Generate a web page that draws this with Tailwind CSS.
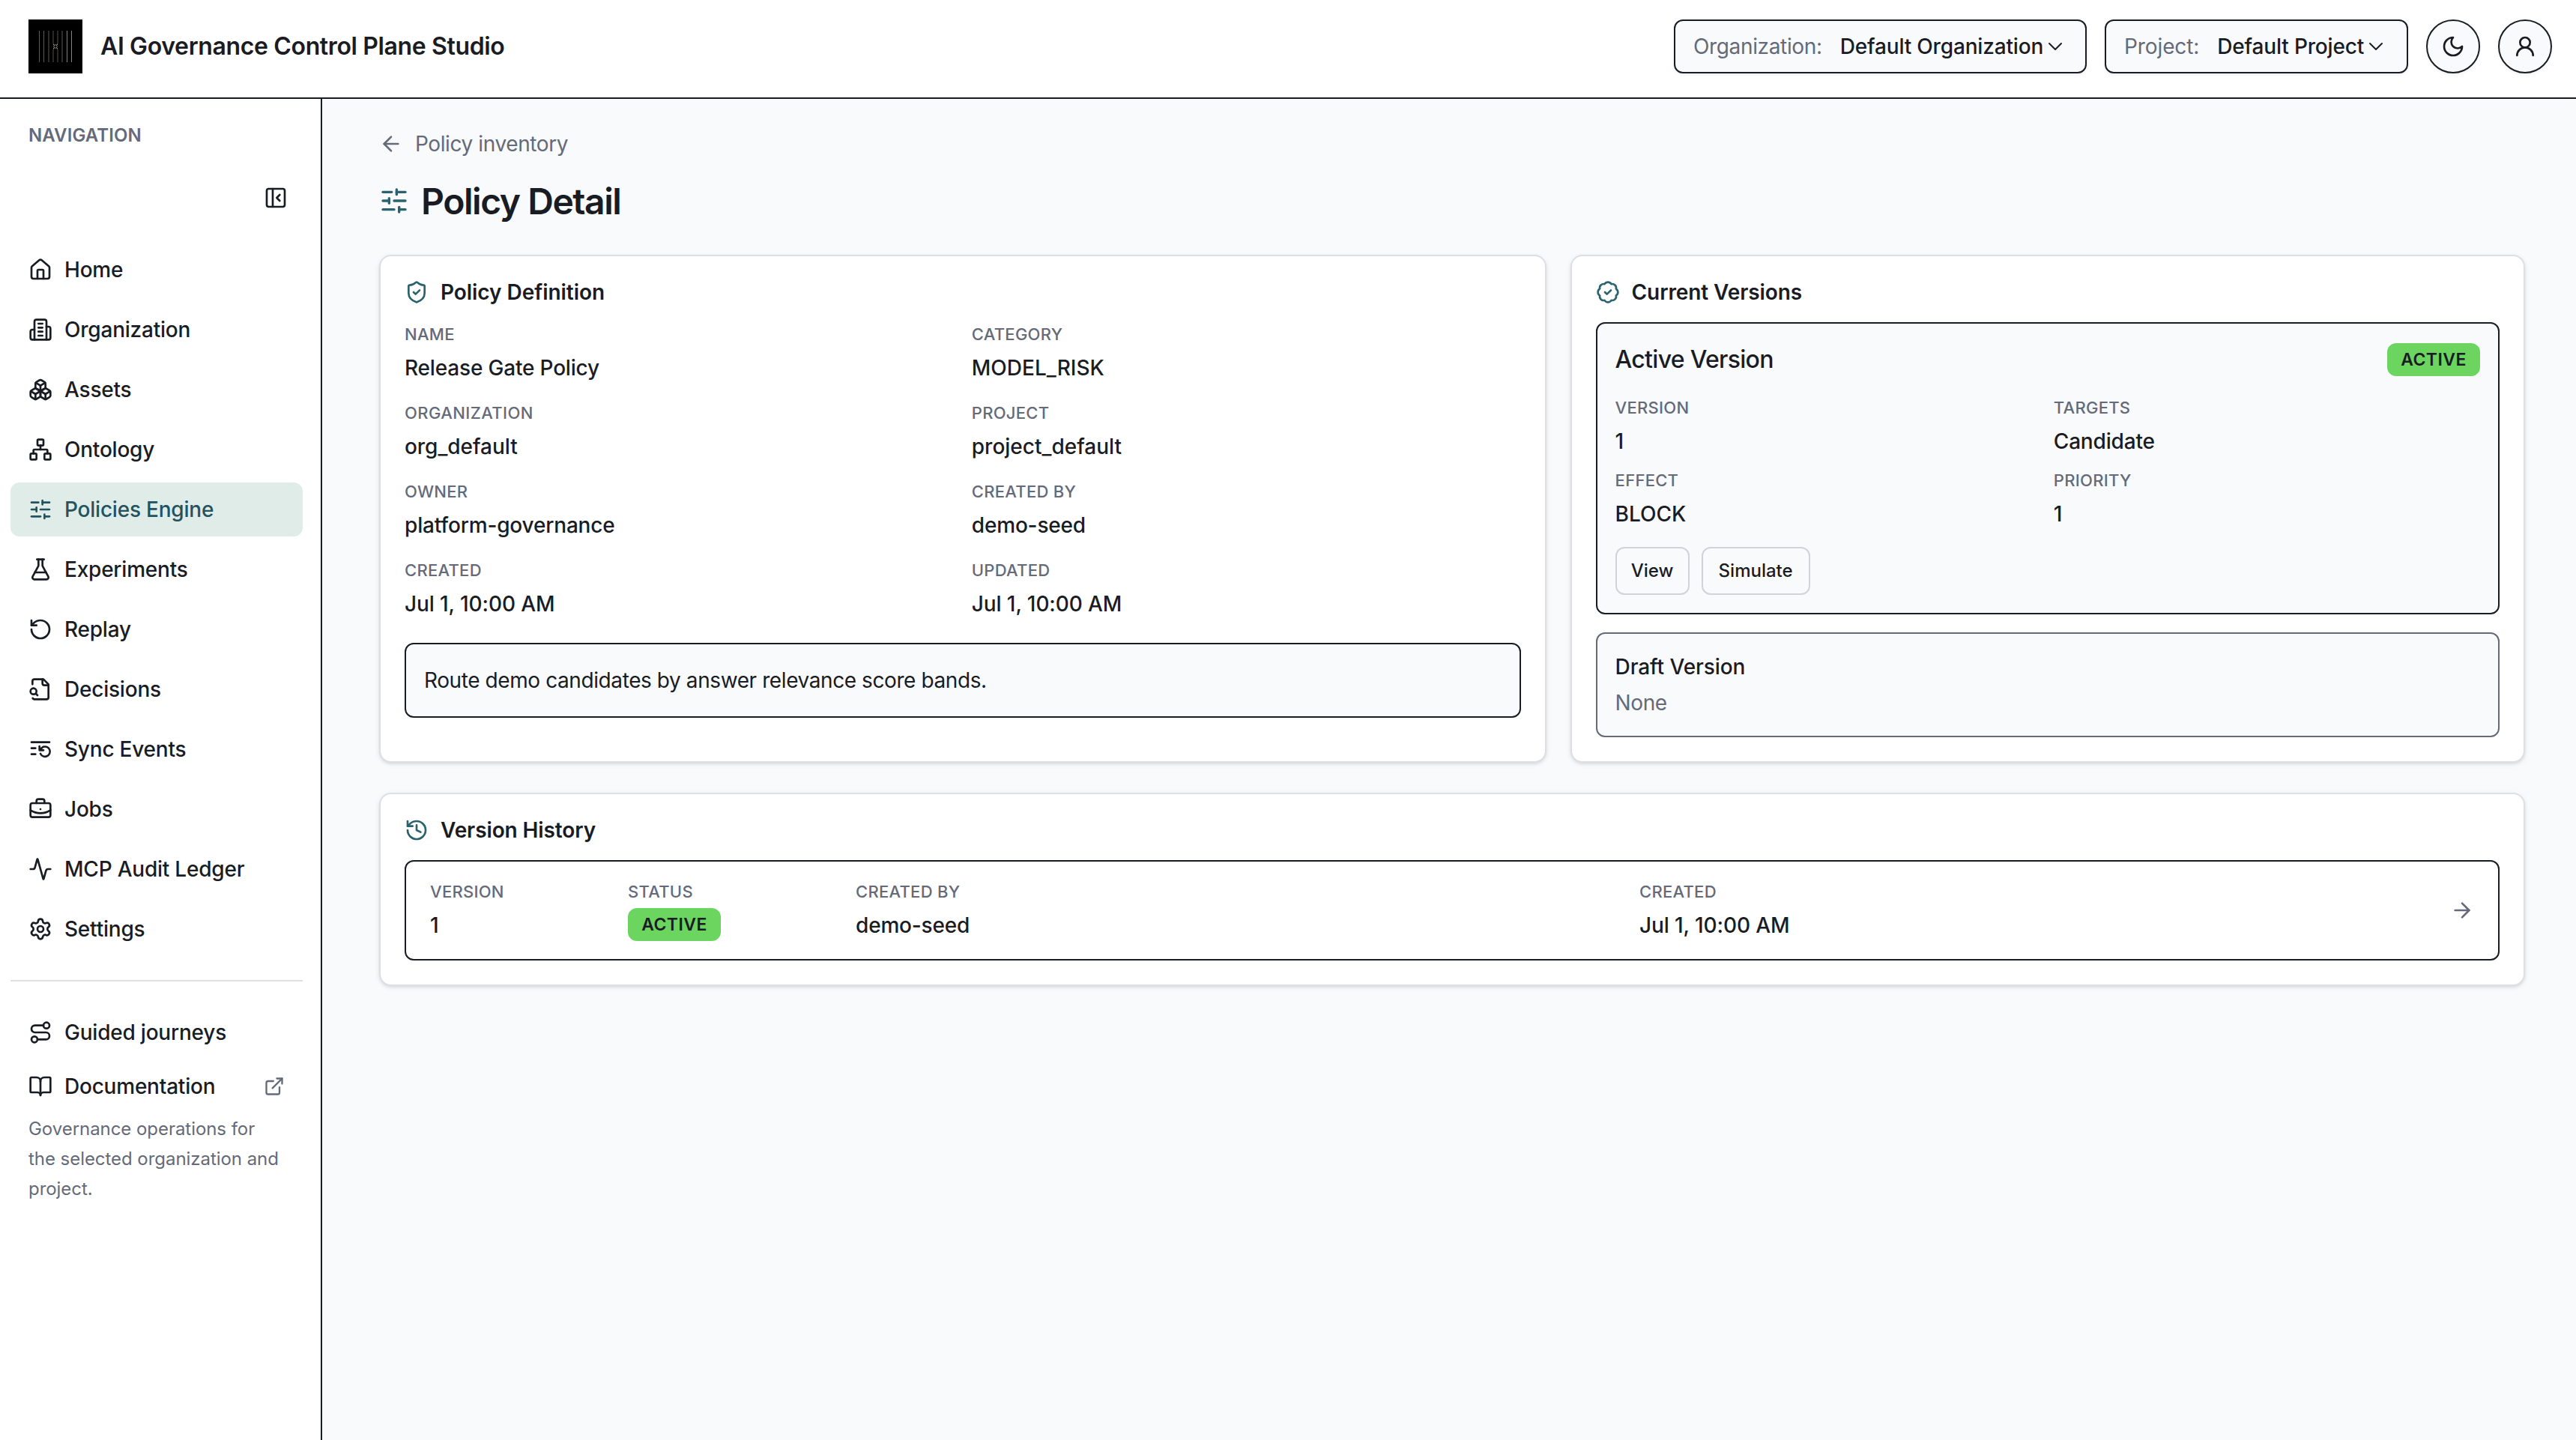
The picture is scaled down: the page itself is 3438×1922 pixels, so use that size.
<!DOCTYPE html>
<html lang="en">

<head>
    <meta charset="UTF-8">
    <meta name="viewport" content="width=device-width, initial-scale=1.0">
    <title>AI Governance Control Plane Studio</title>
    <script src="https://cdn.jsdelivr.net/npm/@tailwindcss/browser@4"></script>
</head>

<body class="bg-[#f9fafc] font-['Inter',sans-serif] text-[28px] leading-10 text-[#1a1c24]">
    <div class="flex h-[1922px] flex-col overflow-hidden">
        <header class="flex h-[132px] shrink-0 items-center justify-between border-b-2 border-[#1a1c24] bg-white pr-8 pb-1.5 pl-[38px]">
            <div class="flex items-center gap-6">
                <svg class="size-[72px]" viewBox="0 0 72 72" fill="none">
                    <rect width="72" height="72" fill="#000" />
                    <g stroke="#5d5b57" stroke-width="1">
                        <path d="M14.5 15v42M20.5 15v42M27 15v42M45 15v42" />
                        <path d="M51.5 15v42M57.5 15v42" stroke="#86837d" />
                        <path d="M33 15v17l1.500 1.500M39 15v17l-1.500 1.500M33 57V40l1.500-1.500M39 57V40l-1.500-1.500" stroke="#54504a" />
                    </g>
                    <circle cx="36" cy="36" r="2.200" stroke="#8d8270" />
                    <path d="M33 33l1.500 1.500M39 33l-1.500 1.500M33 39l1.500-1.500M39 39l-1.500-1.500" stroke="#a3977f" />
                </svg>
                <span class="text-[32px] font-semibold tracking-[-0.36px]">AI Governance Control Plane Studio</span>
            </div>
            <div class="flex items-center gap-6">
                <button class="flex h-[72px] w-[551px] items-center rounded-xl border-2 border-[#1a1c24] bg-[#f9fafc] pl-6 shadow-[0_2px_4px_rgba(0,0,0,0.06)]">
                    <span class="tracking-[-0.35px] text-[#646a7a]">Organization:</span>
                    <span class="ml-6 font-medium tracking-[-0.17px]">Default Organization</span>
                    <svg class="size-8" viewBox="0 0 24 24" fill="none" stroke="currentColor" stroke-width="1.5" stroke-linecap="round" stroke-linejoin="round"><path d="m6 9 6 6 6-6" /></svg>
                </button>
                <button class="flex h-[72px] w-[405px] items-center rounded-xl border-2 border-[#1a1c24] bg-[#f9fafc] pl-6 shadow-[0_2px_4px_rgba(0,0,0,0.06)]">
                    <span class="tracking-[-0.1px] text-[#646a7a]">Project:</span>
                    <span class="ml-6 font-medium tracking-[-0.17px]">Default Project</span>
                    <svg class="size-8" viewBox="0 0 24 24" fill="none" stroke="currentColor" stroke-width="1.5" stroke-linecap="round" stroke-linejoin="round"><path d="m6 9 6 6 6-6" /></svg>
                </button>
                <button class="flex size-[72px] items-center justify-center rounded-full border-2 border-[#1a1c24] bg-[#f9fafc] shadow-[0_2px_4px_rgba(0,0,0,0.06)]">
                    <svg class="size-8" viewBox="0 0 24 24" fill="none" stroke="currentColor" stroke-width="2" stroke-linecap="round" stroke-linejoin="round"><path d="M12 3a6 6 0 0 0 9 9 9 9 0 1 1-9-9Z" /></svg>
                </button>
                <button class="flex size-[72px] items-center justify-center rounded-full border-2 border-[#1a1c24] bg-[#f9fafc] shadow-[0_2px_4px_rgba(0,0,0,0.06)]">
                    <svg class="size-8" viewBox="0 0 24 24" fill="none" stroke="currentColor" stroke-width="2" stroke-linecap="round" stroke-linejoin="round"><circle cx="12" cy="8" r="5" /><path d="M20 21a8 8 0 0 0-16 0" /></svg>
                </button>
            </div>
        </header>

        <div class="flex min-h-0 flex-1">
            <aside class="flex w-[430px] shrink-0 flex-col border-r-2 border-[#1a1c24] bg-white pt-[31px] pr-6 pl-3.5">
                <div class="pl-6 text-[24px] leading-9 font-semibold tracking-[0.1px] text-[#646a7a]">NAVIGATION</div>
                <div class="mt-[49px] flex justify-end pr-5">
                    <svg class="size-8" viewBox="0 0 24 24" fill="none" stroke="currentColor" stroke-width="2" stroke-linecap="round" stroke-linejoin="round"><rect width="18" height="18" x="3" y="3" rx="2" /><path d="M9 3v18" /><path d="m16 15-3-3 3-3" /></svg>
                </div>
                <nav class="mt-11 flex flex-col gap-2 font-medium tracking-[-0.22px]">
                    <a class="flex h-[72px] items-center gap-4 rounded-xl px-6">
                        <svg class="size-8" viewBox="0 0 24 24" fill="none" stroke="currentColor" stroke-width="2" stroke-linecap="round" stroke-linejoin="round"><path d="M15 21v-8a1 1 0 0 0-1-1h-4a1 1 0 0 0-1 1v8" /><path d="M3 10a2 2 0 0 1 .709-1.528l7-5.999a2 2 0 0 1 2.582 0l7 5.999A2 2 0 0 1 21 10v9a2 2 0 0 1-2 2H5a2 2 0 0 1-2-2z" /></svg>
                        Home
                    </a>
                    <a class="flex h-[72px] items-center gap-4 rounded-xl px-6">
                        <svg class="size-8" viewBox="0 0 24 24" fill="none" stroke="currentColor" stroke-width="2" stroke-linecap="round" stroke-linejoin="round"><path d="M6 22V4a2 2 0 0 1 2-2h8a2 2 0 0 1 2 2v18Z" /><path d="M6 12H4a2 2 0 0 0-2 2v6a2 2 0 0 0 2 2h2" /><path d="M18 9h2a2 2 0 0 1 2 2v9a2 2 0 0 1-2 2h-2" /><path d="M10 6h4" /><path d="M10 10h4" /><path d="M10 14h4" /><path d="M10 18h4" /></svg>
                        Organization
                    </a>
                    <a class="flex h-[72px] items-center gap-4 rounded-xl px-6">
                        <svg class="size-8" viewBox="0 0 24 24" fill="none" stroke="currentColor" stroke-width="2" stroke-linecap="round" stroke-linejoin="round"><path d="M2.97 12.92A2 2 0 0 0 2 14.63v3.24a2 2 0 0 0 .97 1.71l3 1.8a2 2 0 0 0 2.06 0L12 19v-5.5l-5-3-4.03 2.42Z" /><path d="m7 16.5-4.74-2.85" /><path d="m7 16.5 5-3" /><path d="M7 16.5v5.17" /><path d="M12 13.5V19l3.97 2.38a2 2 0 0 0 2.06 0l3-1.8a2 2 0 0 0 .97-1.71v-3.24a2 2 0 0 0-.97-1.71L17 10.5l-5 3Z" /><path d="m17 16.5-5-3" /><path d="m17 16.5 4.74-2.85" /><path d="M17 16.5v5.17" /><path d="M7.97 4.42A2 2 0 0 0 7 6.13v4.37l5 3 5-3V6.13a2 2 0 0 0-.97-1.71l-3-1.8a2 2 0 0 0-2.06 0l-3 1.8Z" /><path d="M12 8 7.26 5.15" /><path d="m12 8 4.74-2.85" /><path d="M12 13.5V8" /></svg>
                        Assets
                    </a>
                    <a class="flex h-[72px] items-center gap-4 rounded-xl px-6">
                        <svg class="size-8" viewBox="0 0 24 24" fill="none" stroke="currentColor" stroke-width="2" stroke-linecap="round" stroke-linejoin="round"><rect x="16" y="16" width="6" height="6" rx="1" /><rect x="2" y="16" width="6" height="6" rx="1" /><rect x="9" y="2" width="6" height="6" rx="1" /><path d="M5 16v-3a1 1 0 0 1 1-1h12a1 1 0 0 1 1 1v3" /><path d="M12 12V8" /></svg>
                        Ontology
                    </a>
                    <a class="flex h-[72px] items-center gap-4 rounded-xl bg-[#e0ece8] px-6 text-[#24535f]">
                        <svg class="size-8" viewBox="0 0 24 24" fill="none" stroke="currentColor" stroke-width="2" stroke-linecap="round" stroke-linejoin="round"><path d="M10 5H3" /><path d="M12 19H3" /><path d="M14 3v4" /><path d="M16 17v4" /><path d="M21 12h-9" /><path d="M21 19h-5" /><path d="M21 5h-7" /><path d="M8 10v4" /><path d="M8 12H3" /></svg>
                        Policies Engine
                    </a>
                    <a class="flex h-[72px] items-center gap-4 rounded-xl px-6">
                        <svg class="size-8" viewBox="0 0 24 24" fill="none" stroke="currentColor" stroke-width="2" stroke-linecap="round" stroke-linejoin="round"><path d="M14 2v6a2 2 0 0 0 .245.96l5.51 10.08A2 2 0 0 1 18 22H6a2 2 0 0 1-1.755-2.96l5.51-10.08A2 2 0 0 0 10 8V2" /><path d="M6.453 15h11.094" /><path d="M8.5 2h7" /></svg>
                        Experiments
                    </a>
                    <a class="flex h-[72px] items-center gap-4 rounded-xl px-6">
                        <svg class="size-8" viewBox="0 0 24 24" fill="none" stroke="currentColor" stroke-width="2" stroke-linecap="round" stroke-linejoin="round"><path d="M3 12a9 9 0 1 0 9-9 9.75 9.75 0 0 0-6.74 2.74L3 8" /><path d="M3 3v5h5" /></svg>
                        Replay
                    </a>
                    <a class="flex h-[72px] items-center gap-4 rounded-xl px-6">
                        <svg class="size-8" viewBox="0 0 24 24" fill="none" stroke="currentColor" stroke-width="2" stroke-linecap="round" stroke-linejoin="round"><path d="M14 2v4a2 2 0 0 0 2 2h4" /><path d="M4.268 21a2 2 0 0 0 1.727 1H18a2 2 0 0 0 2-2V7l-5-5H6a2 2 0 0 0-2 2v3" /><path d="m9 18-1.5-1.5" /><circle cx="5" cy="14" r="3" /></svg>
                        Decisions
                    </a>
                    <a class="flex h-[72px] items-center gap-4 rounded-xl px-6">
                        <svg class="size-8" viewBox="0 0 24 24" fill="none" stroke="currentColor" stroke-width="2" stroke-linecap="round" stroke-linejoin="round"><path d="M21 5H3" /><path d="M7 11H3" /><path d="M7 17H3" /><path d="M12 17a5 5 0 1 0 3-6.9 4.5 4.5 0 0 0-1.6 1L12 13" transform="translate(0 -.5)" /><path d="M11 9v4h4" /></svg>
                        Sync Events
                    </a>
                    <a class="flex h-[72px] items-center gap-4 rounded-xl px-6">
                        <svg class="size-8" viewBox="0 0 24 24" fill="none" stroke="currentColor" stroke-width="2" stroke-linecap="round" stroke-linejoin="round"><path d="M12 12h.01" /><path d="M16 6V4a2 2 0 0 0-2-2h-4a2 2 0 0 0-2 2v2" /><path d="M22 13a18.15 18.15 0 0 1-20 0" /><rect width="20" height="14" x="2" y="6" rx="2" /></svg>
                        Jobs
                    </a>
                    <a class="flex h-[72px] items-center gap-4 rounded-xl px-6">
                        <svg class="size-8" viewBox="0 0 24 24" fill="none" stroke="currentColor" stroke-width="2" stroke-linecap="round" stroke-linejoin="round"><path d="M22 12h-2.48a2 2 0 0 0-1.93 1.46l-2.35 8.36a.25.25 0 0 1-.48 0L9.24 2.18a.25.25 0 0 0-.48 0l-2.35 8.36A2 2 0 0 1 4.49 12H2" /></svg>
                        MCP Audit Ledger
                    </a>
                    <a class="flex h-[72px] items-center gap-4 rounded-xl px-6">
                        <svg class="size-8" viewBox="0 0 24 24" fill="none" stroke="currentColor" stroke-width="2" stroke-linecap="round" stroke-linejoin="round"><path d="M9.671 4.136a2.34 2.34 0 0 1 4.659 0 2.34 2.34 0 0 0 3.319 1.915 2.34 2.34 0 0 1 2.33 4.033 2.34 2.34 0 0 0 0 3.831 2.34 2.34 0 0 1-2.33 4.033 2.34 2.34 0 0 0-3.319 1.915 2.34 2.34 0 0 1-4.659 0 2.34 2.34 0 0 0-3.32-1.915 2.34 2.34 0 0 1-2.33-4.033 2.34 2.34 0 0 0 0-3.831A2.34 2.34 0 0 1 6.35 6.051a2.34 2.34 0 0 0 3.319-1.915" /><circle cx="12" cy="12" r="3" /></svg>
                        Settings
                    </a>
                </nav>
                <div class="mt-8 flex flex-col border-t-2 border-[#dddfe4] pt-8 font-medium tracking-[-0.22px]">
                    <a class="flex h-[72px] items-center gap-4 px-6">
                        <svg class="size-8" viewBox="0 0 24 24" fill="none" stroke="currentColor" stroke-width="2" stroke-linecap="round" stroke-linejoin="round"><circle cx="6" cy="19" r="3" /><path d="M9 19h8.500a3.500 3.500 0 0 0 0-7h-11a3.500 3.500 0 0 1 0-7H15" /><circle cx="18" cy="5" r="3" /></svg>
                        Guided journeys
                    </a>
                    <a class="flex h-[72px] items-center gap-4 px-6">
                        <svg class="size-8" viewBox="0 0 24 24" fill="none" stroke="currentColor" stroke-width="2" stroke-linecap="round" stroke-linejoin="round"><path d="M12 7v14" /><path d="M3 18a1 1 0 0 1-1-1V4a1 1 0 0 1 1-1h5a4 4 0 0 1 4 4 4 4 0 0 1 4-4h5a1 1 0 0 1 1 1v13a1 1 0 0 1-1 1h-6a3 3 0 0 0-3 3 3 3 0 0 0-3-3z" /></svg>
                        Documentation
                        <svg class="ml-auto size-7 text-[#646a7a]" viewBox="0 0 24 24" fill="none" stroke="currentColor" stroke-width="2" stroke-linecap="round" stroke-linejoin="round"><path d="M15 3h6v6" /><path d="M10 14 21 3" /><path d="M18 13v6a2 2 0 0 1-2 2H5a2 2 0 0 1-2-2V8a2 2 0 0 1 2-2h6" /></svg>
                    </a>
                    <p class="pt-px pl-6 text-[24px] leading-10 font-normal tracking-[-0.05px] text-[#646a7a]">Governance operations for<br>the selected organization and<br>project.</p>
                </div>
            </aside>

            <main class="flex-1 pt-10 pr-[68px] pl-[76px]">
                <a class="flex items-center gap-4 tracking-[-0.4px] text-[#646a7a]">
                    <svg class="size-8" viewBox="0 0 24 24" fill="none" stroke="currentColor" stroke-width="2" stroke-linecap="round" stroke-linejoin="round"><path d="m12 19-7-7 7-7" /><path d="M19 12H5" /></svg>
                    Policy inventory
                </a>
                <h1 class="mt-6 flex h-16 items-center gap-4 text-[48px] leading-[64px] font-semibold tracking-[-1.45px]">
                    <svg class="size-10 text-[#2a626e]" viewBox="0 0 24 24" fill="none" stroke="currentColor" stroke-width="2" stroke-linecap="round" stroke-linejoin="round"><path d="M10 5H3" /><path d="M12 19H3" /><path d="M14 3v4" /><path d="M16 17v4" /><path d="M21 12h-9" /><path d="M21 19h-5" /><path d="M21 5h-7" /><path d="M8 10v4" /><path d="M8 12H3" /></svg>
                    <span class="pt-0.5">Policy Detail</span>
                </h1>

                <div class="mt-10 grid grid-cols-[1.1fr_0.9fr] gap-8">
                    <section class="h-[678px] rounded-2xl border-2 border-[#dddfe4] bg-white p-8 shadow-[0_2px_6px_rgba(0,0,0,0.1),0_2px_4px_-2px_rgba(0,0,0,0.1)]">
                        <h2 class="flex h-8 items-center gap-4 font-semibold tracking-[-0.05px]">
                            <svg class="size-8 text-[#2a626e]" viewBox="0 0 24 24" fill="none" stroke="currentColor" stroke-width="2" stroke-linecap="round" stroke-linejoin="round"><path d="M20 13c0 5-3.500 7.500-7.660 8.950a1 1 0 0 1-.670-.010C7.500 20.500 4 18 4 13V6a1 1 0 0 1 1-1c2 0 4.500-1.200 6.240-2.720a1.170 1.170 0 0 1 1.520 0C14.510 3.810 17 5 19 5a1 1 0 0 1 1 1z" /><path d="m9 12 2 2 4-4" /></svg>
                            Policy Definition
                        </h2>
                        <dl class="mt-6 grid grid-cols-2 gap-6">
                            <div>
                                <dt class="text-[22px] leading-[33px] font-medium tracking-[0.28px] text-[#646a7a]">NAME</dt>
                                <dd class="mt-2 font-medium tracking-[-0.18px]">Release Gate Policy</dd>
                            </div>
                            <div>
                                <dt class="text-[22px] leading-[33px] font-medium tracking-[0.28px] text-[#646a7a]">CATEGORY</dt>
                                <dd class="mt-2 font-medium">MODEL_RISK</dd>
                            </div>
                            <div>
                                <dt class="text-[22px] leading-[33px] font-medium tracking-[0.4px] text-[#646a7a]">ORGANIZATION</dt>
                                <dd class="mt-2 font-medium tracking-[-0.05px]">org_default</dd>
                            </div>
                            <div>
                                <dt class="text-[22px] leading-[33px] font-medium tracking-[0.28px] text-[#646a7a]">PROJECT</dt>
                                <dd class="mt-2 font-medium">project_default</dd>
                            </div>
                            <div>
                                <dt class="text-[22px] leading-[33px] font-medium tracking-[0.28px] text-[#646a7a]">OWNER</dt>
                                <dd class="mt-2 font-medium tracking-[-0.18px]">platform-governance</dd>
                            </div>
                            <div>
                                <dt class="text-[22px] leading-[33px] font-medium tracking-[0.28px] text-[#646a7a]">CREATED BY</dt>
                                <dd class="mt-2 font-medium tracking-[-0.18px]">demo-seed</dd>
                            </div>
                            <div>
                                <dt class="text-[22px] leading-[33px] font-medium tracking-[0.28px] text-[#646a7a]">CREATED</dt>
                                <dd class="mt-2 font-medium tracking-[-0.1px]">Jul 1, 10:00 AM</dd>
                            </div>
                            <div>
                                <dt class="text-[22px] leading-[33px] font-medium tracking-[0.28px] text-[#646a7a]">UPDATED</dt>
                                <dd class="mt-2 font-medium tracking-[-0.1px]">Jul 1, 10:00 AM</dd>
                            </div>
                        </dl>
                        <p class="mt-8 flex h-[100px] items-center rounded-xl border-2 border-[#1a1c24] bg-[#f9fafc] px-6 tracking-[-0.41px]">Route demo candidates by answer relevance score bands.</p>
                    </section>

                    <section class="h-[678px] rounded-2xl border-2 border-[#dddfe4] bg-white p-8 shadow-[0_2px_6px_rgba(0,0,0,0.1),0_2px_4px_-2px_rgba(0,0,0,0.1)]">
                        <h2 class="flex h-8 items-center gap-4 font-semibold tracking-[-0.1px]">
                            <svg class="size-8 text-[#2a626e]" viewBox="0 0 24 24" fill="none" stroke="currentColor" stroke-width="2" stroke-linecap="round" stroke-linejoin="round"><path d="M3.850 8.620a4 4 0 0 1 4.780-4.770 4 4 0 0 1 6.740 0 4 4 0 0 1 4.780 4.780 4 4 0 0 1 0 6.740 4 4 0 0 1-4.770 4.780 4 4 0 0 1-6.750 0 4 4 0 0 1-4.780-4.770 4 4 0 0 1 0-6.760Z" /><path d="m9 12 2 2 4-4" /></svg>
                            Current Versions
                        </h2>
                        <div class="mt-6 rounded-xl border-2 border-[#1a1c24] bg-[#f9fafc] p-6">
                            <div class="flex h-12 items-center justify-between">
                                <h3 class="text-[32px] font-medium tracking-[-0.7px]">Active Version</h3>
                                <span class="flex h-11 w-[124px] items-center justify-center rounded-xl bg-[#6bd560] text-[23px] font-semibold tracking-[0.02em]">ACTIVE</span>
                            </div>
                            <dl class="mt-6 grid grid-cols-2 gap-4">
                                <div>
                                    <dt class="text-[22px] leading-[33px] font-medium tracking-[0.28px] text-[#646a7a]">VERSION</dt>
                                    <dd class="mt-2 font-medium">1</dd>
                                </div>
                                <div>
                                    <dt class="text-[22px] leading-[33px] font-medium tracking-[0.28px] text-[#646a7a]">TARGETS</dt>
                                    <dd class="mt-2 font-medium tracking-[-0.18px]">Candidate</dd>
                                </div>
                                <div>
                                    <dt class="text-[22px] leading-[33px] font-medium tracking-[0.28px] text-[#646a7a]">EFFECT</dt>
                                    <dd class="mt-2 font-medium">BLOCK</dd>
                                </div>
                                <div>
                                    <dt class="text-[22px] leading-[33px] font-medium tracking-[0.28px] text-[#646a7a]">PRIORITY</dt>
                                    <dd class="mt-2 font-medium">1</dd>
                                </div>
                            </dl>
                            <div class="mt-6 flex gap-4 text-[24px] font-medium">
                                <button class="h-16 w-[99px] rounded-xl border-2 border-[#d0d3da]">View</button>
                                <button class="h-16 w-[145px] rounded-xl border-2 border-[#d0d3da]">Simulate</button>
                            </div>
                        </div>
                        <div class="mt-6 rounded-xl border-2 border-[#646a7a] bg-[#f9fafc] p-6">
                            <h3 class="font-medium tracking-[-0.1px]">Draft Version</h3>
                            <p class="mt-2 tracking-[-0.4px] text-[#646a7a]">None</p>
                        </div>
                    </section>
                </div>

                <section class="mt-10 rounded-2xl border-2 border-[#dddfe4] bg-white p-8 shadow-[0_2px_6px_rgba(0,0,0,0.1),0_2px_4px_-2px_rgba(0,0,0,0.1)]">
                    <h2 class="flex h-8 items-center gap-4 font-semibold tracking-[-0.1px]">
                        <svg class="size-8 text-[#2a626e]" viewBox="0 0 24 24" fill="none" stroke="currentColor" stroke-width="2" stroke-linecap="round" stroke-linejoin="round"><path d="M3 12a9 9 0 1 0 9-9 9.750 9.750 0 0 0-6.740 2.740L3 8" /><path d="M3 3v5h5" /><path d="M12 7v5l4 2" /></svg>
                        Version History
                    </h2>
                    <a class="mt-6 grid h-[134px] grid-cols-[240px_280px_1022px_1fr_32px] gap-x-6 rounded-xl border-2 border-[#1a1c24] px-8 pt-6">
                        <div>
                            <div class="text-[22px] leading-[33px] font-medium tracking-[0.28px] text-[#646a7a]">VERSION</div>
                            <div class="mt-2 font-medium">1</div>
                        </div>
                        <div>
                            <div class="text-[22px] leading-[33px] font-medium tracking-[0.28px] text-[#646a7a]">STATUS</div>
                            <span class="mt-[5px] flex h-11 w-[124px] items-center justify-center rounded-xl bg-[#6bd560] text-[23px] font-semibold tracking-[0.02em]">ACTIVE</span>
                        </div>
                        <div>
                            <div class="text-[22px] leading-[33px] font-medium tracking-[0.28px] text-[#646a7a]">CREATED BY</div>
                            <div class="mt-2 font-medium tracking-[-0.18px]">demo-seed</div>
                        </div>
                        <div>
                            <div class="text-[22px] leading-[33px] font-medium tracking-[0.28px] text-[#646a7a]">CREATED</div>
                            <div class="mt-2 font-medium tracking-[-0.1px]">Jul 1, 10:00 AM</div>
                        </div>
                        <svg class="mt-[25px] size-8 text-[#646a7a]" viewBox="0 0 24 24" fill="none" stroke="currentColor" stroke-width="2" stroke-linecap="round" stroke-linejoin="round"><path d="M5 12h14" /><path d="m12 5 7 7-7 7" /></svg>
                    </a>
                </section>
            </main>
        </div>
    </div>
</body>

</html>
